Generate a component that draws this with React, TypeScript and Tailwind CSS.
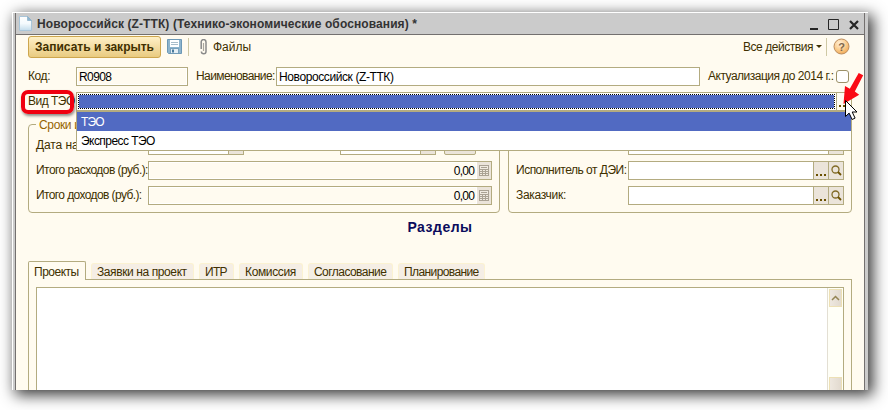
import React from "react";

const line = "border-[#b3ab80]";

function Field({ className = "", children }: { className?: string; children?: React.ReactNode }) {
  return (
    <div className={`box-border flex h-[19px] shrink-0 border bg-white text-black ${line} ${className}`}>{children}</div>
  );
}

function FieldButton({ children, className = "" }: { children?: React.ReactNode; className?: string }) {
  return (
    <div className={`flex shrink-0 items-center justify-center ${className}`}>{children}</div>
  );
}

function Label({ children, className = "" }: { children: React.ReactNode; className?: string }) {
  return <div className={`shrink-0 whitespace-nowrap leading-[19px] ${className}`}>{children}</div>;
}

function DocumentIcon() {
  return (
    <svg width="13" height="15" viewBox="0 0 13 15">
      <defs>
        <linearGradient id="doc" x1="0" y1="0" x2="0" y2="1">
          <stop offset="0" stopColor="#fff" />
          <stop offset=".5" stopColor="#f4fafd" />
          <stop offset="1" stopColor="#c3dcec" />
        </linearGradient>
      </defs>
      <path d="M.5.5h8l4 4v10H.5z" fill="url(#doc)" stroke="#a9c6da" />
      <path d="M8.500.5v4h4z" fill="#8fb6d0" stroke="#7fa8c5" strokeWidth=".6" />
    </svg>
  );
}

function SaveIcon() {
  return (
    <svg width="15" height="15" viewBox="0 0 15 15">
      <path d="M.5.5h14v14H1.500l-1-1z" fill="#8db4cd" stroke="#6c98b6" />
      <path d="M3 1h9v7H3z" fill="#fff" />
      <path d="M4 3.500h7M4 5.500h7" stroke="#a8bdca" />
      <path d="M3.500 9.500h8v5h-8z" fill="#e4eef4" stroke="#5b8baa" strokeWidth=".7" />
      <path d="M5 10.500h2v3H5z" fill="#47799c" />
    </svg>
  );
}

function ClipIcon() {
  return (
    <svg width="8" height="16" viewBox="0 0 8 16" fill="none">
      <path
        d="M1.200 10V3a2.300 2.300 0 0 1 4.800 0v9.500a2.200 2.200 0 0 1-4.600 0"
        stroke="#8a8a8a"
        strokeWidth="1.500"
      />
      <path d="M3.500 4v8" stroke="#a9a69e" strokeWidth="1.200" />
    </svg>
  );
}

function CalcIcon() {
  return (
    <svg width="10" height="11" viewBox="0 0 10 11">
      <rect x=".5" y=".5" width="9" height="10" fill="#f0eae0" stroke="#aaa294" />
      <path d="M2 2.500h6M1 4.500h8M1 6.500h8M1 8.500h8M3.500 4.500v6M6.500 4.500v6" stroke="#aaa294" />
    </svg>
  );
}

function SearchIcon() {
  return (
    <svg width="11" height="11" viewBox="0 0 11 11" fill="none" className="-mt-px">
      <circle cx="4.500" cy="4.500" r="3.500" stroke="#806a25" strokeWidth="1.300" />
      <path d="M7 7l3 3" stroke="#6d5200" strokeWidth="1.800" />
    </svg>
  );
}

function Dots() {
  return (
    <svg width="10" height="19" viewBox="0 0 10 19" shapeRendering="crispEdges" className="shrink-0">
      <path d="M0 13h2v2H0zM4 13h2v2H4zM8 13h2v2H8z" fill="#6a5000" />
    </svg>
  );
}

function Fieldset({ legend, className, children }: { legend?: string; className: string; children: React.ReactNode }) {
  return (
    <div className={`relative box-border h-[89px] rounded-[4px] border pt-[11px] ${line} ${className}`}>
      {legend && (
        <div className="absolute -top-[8px] left-[7px] bg-[#fffbf0] px-[3px] leading-[16px] tracking-[-0.35px] text-[#966400]">
          {legend}
        </div>
      )}
      <div className="flex flex-col gap-[6px]">{children}</div>
    </div>
  );
}

function TotalRow({ label, className }: { label: string; className: string }) {
  return (
    <div className="flex pl-[7px]">
      <Label className={`w-[112px] ${className}`}>{label}</Label>
      <Field className="w-[344px] justify-end">
        <div className="m-px flex-1 bg-[#fffbf0] pr-[2px] text-right leading-[16px] tracking-[-0.8px]">0,00</div>
        <FieldButton className="w-[14px] bg-[#ebe4da]">
          <CalcIcon />
        </FieldButton>
      </Field>
    </div>
  );
}

function LookupRow({ label, className }: { label: string; className: string }) {
  return (
    <div className="flex pl-[7px]">
      <Label className={`w-[112px] ${className}`}>{label}</Label>
      <Field className="w-[216px] justify-end">
        <FieldButton className={`w-[15px] border-l bg-[#ebe4da] ${line}`}>
          <Dots />
        </FieldButton>
        <FieldButton className={`w-[15px] border-l bg-[#ebe4da] ${line}`}>
          <SearchIcon />
        </FieldButton>
      </Field>
    </div>
  );
}

function Tab({ children, className }: { children: string; className: string }) {
  return (
    <div
      className={`mr-[5px] h-[16px] shrink-0 whitespace-nowrap rounded-t-[3px] border border-b-0 border-[#fbf2d2] bg-[#f5eee5] pl-[5px] leading-[17px] ${className}`}
    >
      {children}
    </div>
  );
}

function TitleBar() {
  return (
    <div className="flex h-[22px] items-center border-b border-[#73706f] bg-[#cbcbcb] pl-[3px]">
      <DocumentIcon />
      <div className="ml-[5px] flex-1 whitespace-nowrap text-[12px] font-bold tracking-[0.1px] text-[#333]">
        Новороссийск (Z-ТТК) (Технико-экономические обоснования) *
      </div>
      <svg width="52" height="14" viewBox="0 0 52 14" className="mr-[3px]" fill="none" stroke="#262626">
        <path d="M1 12h8" strokeWidth="2" />
        <path d="M19.500 2.500h10v10h-10z" />
        <path d="M41 4l8 8M49 4l-8 8" strokeWidth="2.200" />
      </svg>
    </div>
  );
}

function Toolbar() {
  return (
    <div className="flex h-[23px] items-center pl-[12px] pr-[14px]">
      <div className="mt-px flex h-[22px] w-[133px] items-center justify-center whitespace-nowrap rounded-[3px] border border-[#cda64e] bg-linear-to-b from-[#fff0c6] to-[#e9cb80] text-[12px] font-bold tracking-[0px] text-[#3f2f00]">
        Записать и закрыть
      </div>
      <div className="ml-[6px]">
        <SaveIcon />
      </div>
      <div className="ml-[6px] h-[18px] w-px bg-[#cfc9a5]" />
      <div className="ml-[11px]">
        <ClipIcon />
      </div>
      <div className="ml-[5px] tracking-[0px]">Файлы</div>
      <div className="ml-auto flex items-center">
        <div className="w-[73px] whitespace-nowrap tracking-[-0.45px]">Все действия</div>
        <svg width="6" height="3" viewBox="0 0 6 3">
          <path d="M0 0h6L3 3z" fill="#403000" />
        </svg>
        <div className="ml-[4px] h-[18px] w-px bg-[#cfc9a5]" />
        <svg width="17" height="17" viewBox="0 0 17 17" className="ml-[6px]">
          <defs>
            <radialGradient id="help" cx=".4" cy=".3" r=".8">
              <stop offset="0" stopColor="#fff1dc" />
              <stop offset=".5" stopColor="#fbcf92" />
              <stop offset="1" stopColor="#eda14a" />
            </radialGradient>
          </defs>
          <circle cx="8.500" cy="8.500" r="7.500" fill="url(#help)" stroke="#bd8d5e" />
          <text x="8.500" y="12.500" textAnchor="middle" className="fill-[#80664b] text-[11px] font-bold">
            ?
          </text>
        </svg>
      </div>
    </div>
  );
}

function KindField() {
  return (
    <div className="relative mt-[6px] flex pl-[12px]">
      <Label className="w-[48px] tracking-[-0.5px]">Вид ТЭО</Label>
      <Field className="w-[776px]">
        <div className="m-px h-[15px] flex-1 border border-dotted border-black bg-[#516ac2] bg-clip-padding" />
        <FieldButton className={`w-[15px] border-l bg-[#fffbf0] ${line}`}>
          <Dots />
        </FieldButton>
      </Field>
      <div className={`absolute left-[60px] top-[19px] z-10 h-[40px] w-[776px] border bg-white ${line}`}>
        <div className="h-[19px] bg-[#516ac2] pl-[4px] leading-[20px] tracking-[-0.9px] text-white">ТЭО</div>
        <div className="pl-[4px] leading-[20px] tracking-[-0.55px] text-black">Экспресс ТЭО</div>
      </div>
      <div className="absolute left-[5px] top-[-2px] z-20 h-[24px] w-[53px] rounded-[7px] border-4 border-[#f0000f] shadow-[1px_2px_3px_rgba(0,0,0,0.45)]" />
      <svg className="absolute left-[822px] top-[-20px] z-20" width="32" height="52" viewBox="0 0 32 52">
        <path d="M20.700 1l4.500 2.300L16.800 19.500l4.400 3.300L5.500 32 7 14l4.800 2.700z" fill="#fa0a14" />
        <path
          d="M7.500 28.500v16l3.600-3.400 3 6.400 3-1.400-2.900-6.100h4.800z"
          fill="#fff"
          stroke="#000"
          strokeWidth="1"
        />
      </svg>
    </div>
  );
}

export default function App() {
  return (
    <div className="h-[410px] w-[888px] overflow-hidden bg-white pl-[12px] pt-[12px] font-['Liberation_Sans',Arial,sans-serif] text-[12px] leading-[16px] text-[#403000]">
      <div className="h-[378px] w-[856px] overflow-hidden border-l border-t border-white bg-[#cbcbcb] shadow-[4px_4px_14px_1px_rgba(0,0,0,0.78)]">
        <div className="ml-[2px] h-[377px] w-[850px] border-x border-[#73706f] bg-[#fffbf0]">
          <TitleBar />
          <Toolbar />

          <div className="mt-[9px] flex pl-[12px]">
            <Label className="w-[48px] tracking-[-0.4px]">Код:</Label>
            <Field className="w-[112px]">
              <div className="m-px flex-1 bg-[#fffbf0] pl-px leading-[16px] tracking-[-0.6px]">R0908</div>
            </Field>
            <Label className="ml-[8px] w-[80px] tracking-[-0.6px]">Наименование:</Label>
            <Field className="w-[424px] pl-[2px]">
              <div className="leading-[18px] tracking-[-0.4px]">Новороссийск (Z-ТТК)</div>
            </Field>
            <Label className="ml-[8px] w-[128px] tracking-[-0.5px]">Актуализация до 2014 г.:</Label>
            <div className="mt-[3px] size-[13px] rounded-[3px] border border-[#9c9168] bg-white" />
          </div>

          <KindField />

          <div className="mt-[13px] flex gap-[8px] pl-[12px]">
            <Fieldset legend="Сроки&nbsp;и" className="w-[472px]">
              <div className="flex pl-[7px]">
                <Label className="w-[112px] tracking-[-0.1px]">Дата на</Label>
                <Field className="w-[96px] justify-end">
                  <FieldButton className={`w-[15px] border-l bg-[#ebe4da] ${line}`} />
                </Field>
                <Field className="ml-[96px] w-[96px] justify-end">
                  <FieldButton className={`w-[15px] border-l bg-[#ebe4da] ${line}`} />
                </Field>
                <div className={`ml-[8px] h-[19px] w-[32px] rounded-[2px] border bg-[#ebe4da] ${line}`} />
              </div>
              <TotalRow label="Итого расходов (руб.):" className="tracking-[-0.55px]" />
              <TotalRow label="Итого доходов (руб.):" className="tracking-[-0.6px]" />
            </Fieldset>
            <Fieldset className="w-[344px]">
              <div className="flex pl-[7px]">
                <Label className="w-[112px]">
                  <span className="block h-[19px]" />
                </Label>
                <Field className="w-[216px] justify-end">
                  <FieldButton className={`w-[15px] border-l bg-[#ebe4da] ${line}`} />
                </Field>
              </div>
              <LookupRow label="Исполнитель от ДЭИ:" className="tracking-[-0.5px]" />
              <LookupRow label="Заказчик:" className="tracking-[-0.3px]" />
            </Fieldset>
          </div>

          <div className="mt-[5px] h-[43px] text-center text-[14px] font-bold leading-[18px] tracking-[0.5px] text-[#0b0b5c]">
            Разделы
          </div>

          <div className="relative z-0 flex h-[18px] items-end pl-[12px]">
            <div
              className={`relative z-10 -mb-px mr-[5px] h-[19px] w-[58px] shrink-0 rounded-t-[2px] border border-b-0 bg-[#fffbf0] pl-[5px] leading-[20px] tracking-[-0.5px] ${line}`}
            >
              Проекты
            </div>
            <Tab className="w-[103px] tracking-[-0.4px]">Заявки на проект</Tab>
            <Tab className="w-[35px] tracking-[-0.7px]">ИТР</Tab>
            <Tab className="w-[64px] tracking-[-0.35px]">Комиссия</Tab>
            <Tab className="w-[85px] tracking-[-0.55px]">Согласование</Tab>
            <Tab className="w-[87px] tracking-[-0.6px]">Планирование</Tab>
          </div>
          <div className={`ml-[12px] h-[111px] w-[824px] border border-b-0 px-[7px] pt-[7px] ${line}`}>
            <div className={`flex h-[103px] justify-end border border-b-0 bg-white ${line}`}>
              <div className="flex w-[16px] flex-col border-l border-[#e3dfd3] bg-[#fffff7] px-px pt-px">
                <div className="flex h-[18px] w-[13px] items-center justify-center border border-[#ede0b5] bg-linear-to-r from-[#eee8df] to-[#e2dacf]">
                  <svg width="9" height="6" viewBox="0 0 9 6" fill="none">
                    <path d="M1 5l3.500-3.500L8 5" stroke="#948554" strokeWidth="1.500" />
                  </svg>
                </div>
                <div className="mt-[70px] h-[13px] w-[13px] border border-b-0 border-[#ede0b5] bg-linear-to-r from-[#eee8df] to-[#e2dacf]" />
              </div>
            </div>
          </div>
        </div>
      </div>
    </div>
  );
}
